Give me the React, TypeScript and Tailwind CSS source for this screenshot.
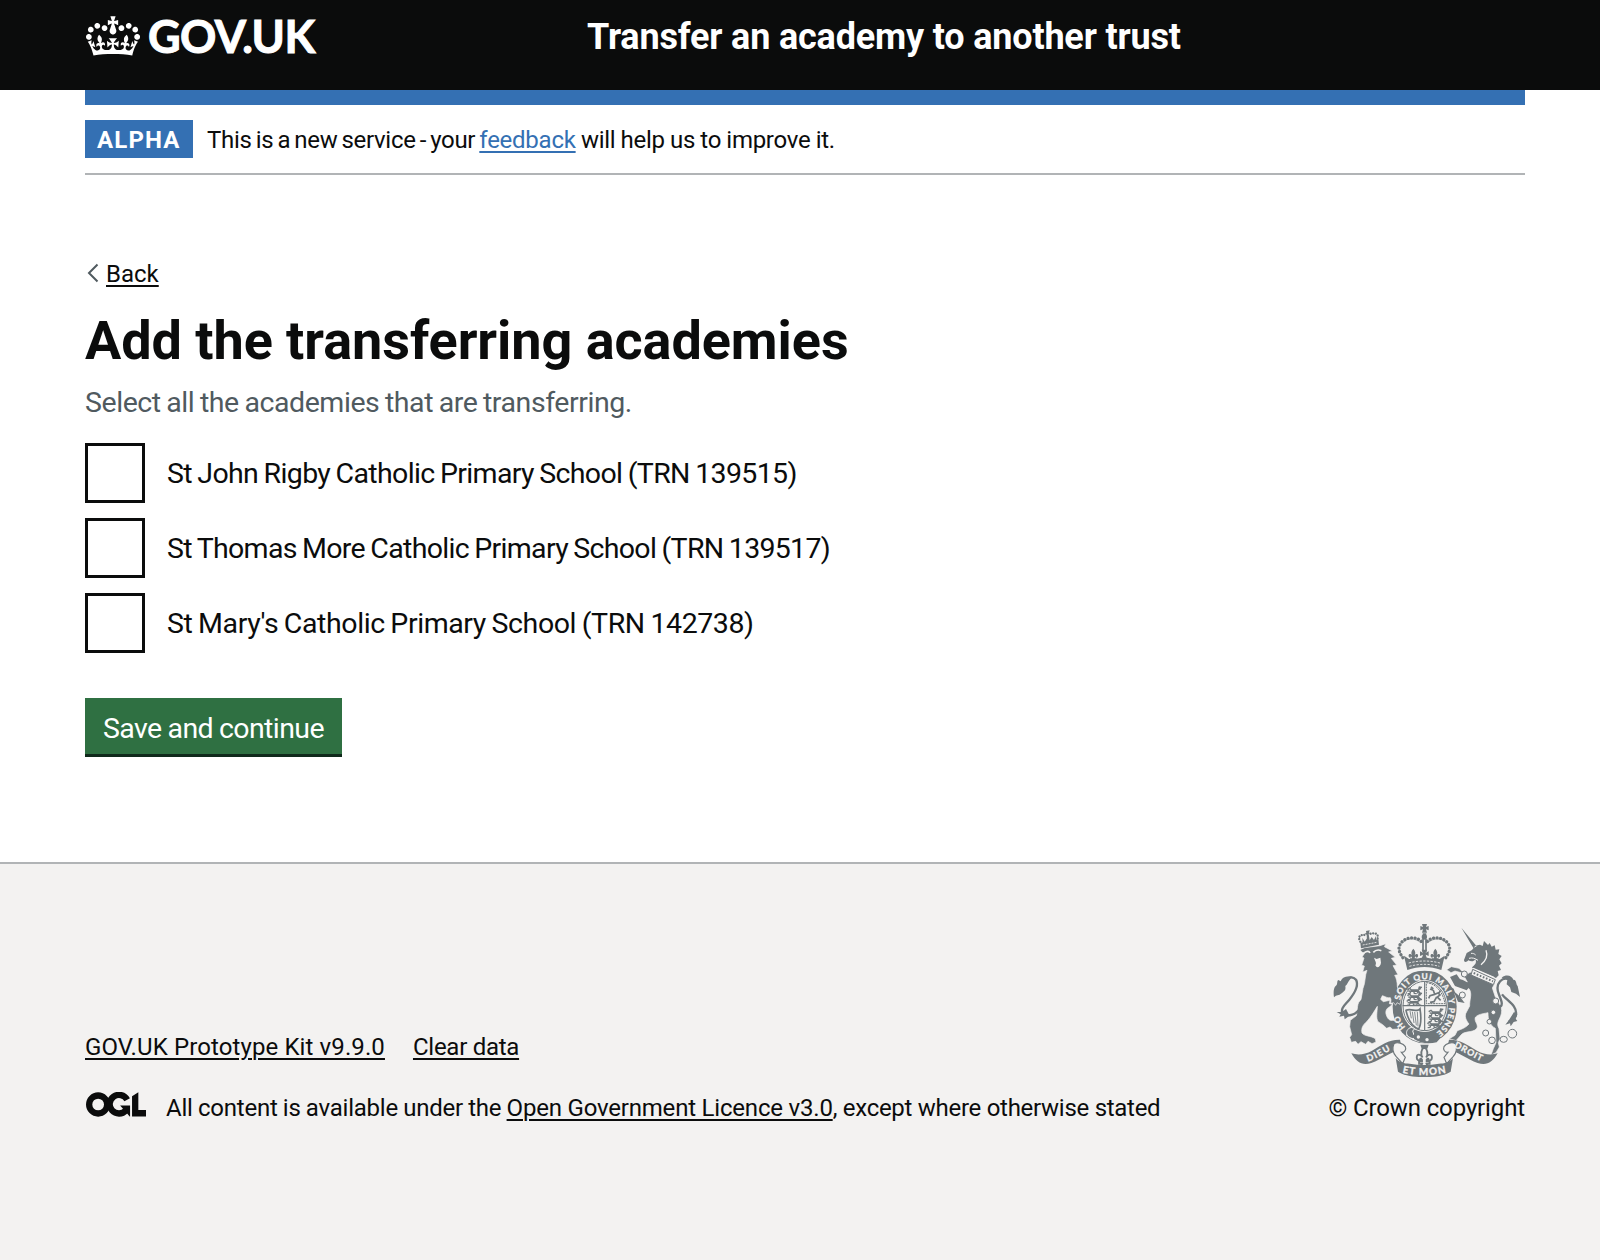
import type { ReactNode } from "react";

const academies = [
  { id: "a1", label: "St John Rigby Catholic Primary School (TRN 139515)", tracking: "tracking-[-0.65px]" },
  { id: "a2", label: "St Thomas More Catholic Primary School (TRN 139517)", tracking: "tracking-[-0.69px]" },
  { id: "a3", label: "St Mary's Catholic Primary School (TRN 142738)", tracking: "tracking-[-0.41px]" },
];

function CrownLogo() {
  return (
    <svg viewBox="0 0 132 97" className="ml-px h-[40px] w-[54px]" fill="currentColor" aria-hidden="true">
      <path
        fillRule="evenodd"
        d="M25 30.2c3.5 1.5 7.7-.2 9.1-3.7 1.5-3.6-.2-7.8-3.9-9.2-3.6-1.4-7.6.3-9.1 3.9-1.4 3.5.3 7.5 3.9 9zM9 39.5c3.6 1.5 7.8-.2 9.2-3.7 1.5-3.6-.2-7.8-3.9-9.1-3.6-1.5-7.6.2-9.1 3.8-1.4 3.5.3 7.5 3.8 9zM4.4 57.2c3.5 1.5 7.7-.2 9.1-3.8 1.5-3.6-.2-7.7-3.9-9.1-3.5-1.5-7.6.3-9.1 3.8-1.4 3.5.3 7.6 3.9 9.1zm38.3-21.4c3.5 1.5 7.7-.2 9.1-3.8 1.5-3.6-.2-7.7-3.9-9.1-3.6-1.5-7.6.3-9.1 3.8-1.3 3.6.4 7.7 3.9 9.1zm64.4-5.6c-3.6 1.5-7.8-.2-9.1-3.7-1.5-3.6.2-7.8 3.8-9.2 3.6-1.4 7.7.3 9.2 3.9 1.3 3.5-.4 7.5-3.9 9zm15.9 9.3c-3.6 1.5-7.7-.2-9.1-3.7-1.5-3.6.2-7.8 3.7-9.1 3.6-1.5 7.7.2 9.2 3.8 1.5 3.5-.3 7.5-3.8 9zm4.7 17.7c-3.6 1.5-7.8-.2-9.2-3.8-1.5-3.6.2-7.7 3.9-9.1 3.6-1.5 7.7.3 9.2 3.8 1.3 3.5-.4 7.6-3.9 9.1zM89.3 35.8c-3.6 1.5-7.8-.2-9.2-3.8-1.4-3.6.2-7.7 3.9-9.1 3.6-1.5 7.7.3 9.2 3.8 1.4 3.6-.3 7.7-3.9 9.1zM69.7 17.7l8.9 4.7V9.3l-8.9 2.8c-.2-.3-.5-.6-.9-.9L72.4 0H59.6l3.5 11.2c-.3.3-.6.5-.9.9l-8.8-2.8v13.1l8.8-4.7c.3.3.6.7.9.9l-5 15.4v.1c-.2.8-.4 1.6-.4 2.4 0 4.1 3.1 7.5 7 8.1h.2c.3 0 .7.1 1 .1.4 0 .7 0 1-.1h.2c4-.6 7.1-4.1 7.1-8.1 0-.8-.1-1.7-.4-2.4V34l-5.1-15.4c.4-.2.7-.6 1-.9zM66 92.8c16.9 0 32.8 1.1 47.1 3.2 4-16.9 8.9-26.7 14-33.5l-9.6-3.4c1 4.9 1.1 7.2 0 10.2-1.5-1.4-3-4.3-4.2-8.7L108.6 76c2.8-2 5-3.2 7.5-3.3-4.4 9.4-10 11.9-13.6 11.2-4.3-.8-6.3-4.6-5.6-7.9 1-4.7 5.7-5.9 8-.5 4.3-8.7-3-11.4-7.6-8.8 7.1-7.2 7.9-13.5 2.1-21.1-8 6.1-8.1 12.3-4.5 20.8-4.7-5.4-12.1-2.5-9.5 6.2 3.4-5.2 7.9-2 7.2 3.1-.6 4.3-6.4 7.8-13.5 7.2-10.3-.9-10.9-8-11.2-13.8 2.5-.5 7.1 1.8 11 7.3L80.2 60c-4.1 4.4-8 5.3-12.3 5.4 1.4-4.4 8-11.6 8-11.6H55.5s6.4 7.2 7.9 11.6c-4.2-.1-8-1-12.3-5.4l1.4 16.4c3.9-5.5 8.5-7.7 10.9-7.3-.3 5.8-.9 12.8-11.1 13.8-7.2.6-12.9-2.9-13.5-7.2-.7-5 3.8-8.3 7.1-3.1 2.7-8.7-4.6-11.6-9.4-6.2 3.7-8.5 3.6-14.7-4.6-20.8-5.8 7.6-5 13.9 2.2 21.1-4.7-2.6-11.9.1-7.7 8.8 2.3-5.5 7.1-4.2 8.1.5.7 3.3-1.3 7.1-5.7 7.9-3.5.7-9-1.8-13.5-11.2 2.5.1 4.7 1.3 7.5 3.3l-4.7-15.4c-1.2 4.4-2.7 7.2-4.3 8.7-1.1-3-.9-5.3 0-10.2l-9.5 3.4c5 6.9 9.9 16.7 14 33.5 14.8-2.1 30.8-3.2 47.7-3.2z"
      />
    </svg>
  );
}

/* Open Government Licence mark: interlocked ring, open ring with spur, and angled bar. */
function OglLogo() {
  return (
    <svg viewBox="0 0 483.2 195.7" className="-mt-px ml-px h-[25px] w-[60px]" fill="currentColor" aria-hidden="true">
      <circle cx="97.8" cy="97.8" r="72.5" fill="none" stroke="currentColor" strokeWidth="50.5" />
      <path d="M331.5 59A75 75 0 1 0 322 145" fill="none" stroke="currentColor" strokeWidth="50.5" />
      <path d="M275 106h80v88h-3l-77-88z" />
      <path d="M370.8 32.4 421.5 0v142.8h61.7v50.7H370.8z" />
    </svg>
  );
}

const G = "#6f777b";
const L = "#f3f2f1";

function ChargeLion({ x, y }: { x: number; y: number }) {
  return (
    <g transform={`translate(${x} ${y})`} stroke={G} fill="none" strokeWidth="4">
      <path d="M3 5l7-4 5 5 22-1 7-4M6 9l9 1 22-1 4 7 6 1M14 8l-3 8-7 1M22 9l2 7 7 1M37 8l-4 8M37 3l2-6 8 1" />
    </g>
  );
}

function Fleur({ x, y, s = 1 }: { x: number; y: number; s?: number }) {
  return (
    <path
      transform={`translate(${x} ${y}) scale(${s})`}
      d="M0-16C6-9 7-3 3 3 6-3 13-4 13 3c0 4-3 6-6 5 1-3-1-4-3-1v3h5v4H4l3 7h-14l3-7h-5v-4h5V7c-2-3-4-2-3 1-3 1-6-1-6-5 0-7 7-6 10 0C-7-3-6-9 0-16z"
    />
  );
}

function RoyalArms() {
  return (
    <svg viewBox="9 27 561 459" className="mr-[5px] h-[153px] w-[187px]" fill={G} aria-hidden="true">
      {/* crown */}
      <path d="M276 27h15l-3 9 8-3v13l-8-3 3 10h-15l3-10-8 3V33l8 3zM278 55h11v10h-11z" />
      <circle cx="283" cy="66" r="8" />
      <path d="M279 72v38M288 72v38" stroke={G} strokeWidth="5" />
      <path
        d="M274 79C255 60 213 67 207 98c-1 14 8 24 16 37M292 79c19-19 61-12 67 19 1 14-8 24-16 37"
        fill="none"
        stroke={G}
        strokeWidth="10"
        strokeLinecap="round"
        strokeDasharray="0.1 10.5"
      />
      <path d="M220 82c10-13 35-15 53 2M346 82c-10-13-35-15-53 2" fill="none" stroke={G} strokeWidth="2" />
      <Fleur x={250} y={119} s={1.1} />
      <Fleur x={316} y={119} s={1.1} />
      <path d="M275 104h16l-4 9 9-4v14l-9-4 4 12h-16l4-12-9 4v-14l9 4z" />
      <path d="M222 122l15 10h18l28-5 28 5h18l15-10-10 43c-34-12-68-12-102 0z" />
      <path d="M236 144c31-8 63-8 94 0M238 154c30-8 60-8 90 0" fill="none" stroke={L} strokeWidth="2.5" strokeDasharray="7 4" />

      {/* garter and shield */}
      <ellipse cx="284" cy="275" rx="96" ry="110" />
      <path d="M228 168c36-12 74-12 110 0l-1 8c-34-12-72-12-108 0z" fill={L} />
      <ellipse cx="284" cy="273" rx="69" ry="78" fill={L} />
      <ellipse cx="284" cy="273" rx="65" ry="74" fill="none" stroke={G} strokeWidth="3" />
      <path d="M218 272h132M284 199v148" stroke={G} strokeWidth="3.5" />
      <ChargeLion x={229} y={219} />
      <ChargeLion x={229} y={237} />
      <ChargeLion x={227} y={254} />
      <ChargeLion x={293} y={285} />
      <ChargeLion x={292} y={303} />
      <ChargeLion x={289} y={321} />
      <path d="M289 203c28 2 50 28 56 63h-56z" fill="none" stroke={G} strokeWidth="3" strokeDasharray="6 2" />
      <path
        d="M300 222l10 4 4 12 10-4 6 6-8 6 10 10M314 238l-14 4-4 8M320 246l-8 14-12 2M303 216l7 6M331 226l-4 8"
        fill="none"
        stroke={G}
        strokeWidth="5"
      />
      <path d="M228 286c6 28 20 50 38 56 8-14 8-34 4-60-8 12-28-4-42 4z" fill="none" stroke={G} strokeWidth="5" />
      <path d="M240 288l4 22M247 290l5 34M254 291l5 40M262 290l2 44" stroke={G} strokeWidth="2.5" />
      <path d="M232 353c22 22 62 30 118 12l-4 10c-46 18-92 10-118-14z" fill={L} />
      <path d="M236 341c-8 6-9 18 0 24 9 8 20 7 24 0l-8-5-4-12 6-7c-6-4-13-5-18 0z" stroke={L} strokeWidth="3" />
      <path d="M252 350c20 14 48 20 82 16l-14 16c-26 6-50 2-68-10z" />
      <circle cx="265" cy="366" r="5" fill={L} />
      <circle cx="291" cy="374" r="5" fill={L} />

      {/* lion */}
      <path
        d="M96 112l-6-8 14-6 46-6 18-6-5 9 24 13-11 3 20 16-12 3 16 20-11 2 15 27-10 2c5 8 8 20 8 34l5 19 8 12-5 22-9-5-4 8-6-8-9 2 1-11-2-6c-9 2-16-4-24-6l-5 11 8 7 20-4-2 10 10 2-10 8c-9 4-13 14-9 24 4 12 10 18 20 16l16 5 5 9-6 12-16 1-8-7-10 4-12-11-14-9c-7-12-2-30-2-46-10 16-18 30-30 44-14 12-19 22-16 36 7 10 26 8 40 17l2 10-12 5-12-7-7 9-14-8-9 8-7-9-13 3-5-15 6-8-6-24 2-19 18-14c5-18 0-38 14-48l6-34c8-18 5-38 12-54l-13 5 5-18-8-2 7-22-6-3 9-13z"
        stroke={L}
        strokeWidth="2"
      />
      <path d="M103 113c8-6 14-5 17 1M130 112c7-8 16-8 24-5" fill="none" stroke={L} strokeWidth="5" />
      <path d="M132 128l8 4 11-4 2 15c-2 13-12 19-17 8 5-7-1-14-4-23z" fill={L} />
      <path d="M91 83l54-11 2 17-54 11z" />
      <path
        d="M91 80c-9-14-1-24 18-19M143 70c3-14-8-19-27-12"
        fill="none"
        stroke={G}
        strokeWidth="7"
        strokeLinecap="round"
        strokeDasharray="0.1 8"
      />
      <path d="M108 48l11-2-2 7 4 1-5 3 3 19-8 2-1-19-6-2 5-4zM97 68l7 12 7-10 7 7 7-11 7 9 6-12v12l-40 9z" />
      <path d="M98 90l42-8" stroke={L} strokeWidth="2.5" strokeDasharray="6 3" />
      <path
        d="M86 286c-15 18-38 20-50 4-3-13 10-21 22-36 18-22 28-45 20-60-8-10-24-9-36 2"
        fill="none"
        stroke={G}
        strokeWidth="7"
      />
      <path d="M68 185c-26-2-31 4-36 14l-7-4c-6 4 0 12-8 18-6 5-7 18-5 34 8-8 14-4 23-12 8-8 13-8 11-22 7-5 9-18 22-28z" />
      <path d="M48 282c-10 8-18 10-28 9l12 7-4 7 14-3 2 11 15-11z" />

      {/* unicorn */}
      <path d="M394 38l36 61 10-5zM404 130l6-16 16-9 10-13 14-3 8 4 4-15 12 12 5-6 6 11 9-4 3 13 11-1-3 14 10 6-7 10 7 12-8 7 6 13-10 3 3 13-8 8-72-31c7-8 16-13 10-25-6 9-15 6-21 3-5 6-13 7-13-1z" />
      <path d="M423 115c7 0 10 1 14 5M417 130c10-3 18 0 27 6" fill="none" stroke={L} strokeWidth="3" />
      <path d="M468 106c7 18 0 31-15 43" fill="none" stroke={L} strokeWidth="4" />
      <path
        d="M421 172l74 32-8 15 8 24c4 16 20 26 20 44 0 24-20 33-8 54l3 30-5 12 3 13-10 17-15 7 7-19 8-18-2-43c-19-11-22-28-22-47-19 4-30 5-38 14-5 14 14 23 2 36-12 10-36 5-45 17l-15 17-20-6 17-10 7-14c14-5 26-9 35-20-8-10-16-24-7-37l9-17c-1-19 9-36-2-52l-28-18c-7-4-9-6-6 8-8 1-13-5-12-13 8-9 18-7 28-4l13 7-15-27-22-6-12 5-13-9 14-9 23 5 20 19z"
        stroke={L}
        strokeWidth="2"
      />
      <path d="M360 186l20-8 17 25 23 11-10 12-35-13zM374 236l-16-9 1-14 12 8 4 11 14 12 15 20-20-4z" />
      <path d="M430 158l62 27 5 10-6 15-69-31z" fill={L} />
      <path d="M428 163l-5 17 67 29 6-15z" fill="none" stroke={G} strokeWidth="3" />
      <path d="M431 174l58 25" stroke={G} strokeWidth="6" strokeDasharray="5 5" />
      <path
        d="M503 279c22-5 9-26 3-43-12-32 12-54 35-41l8 12M516 238c14 19 46 33 42 61-3 14-12 18-22 20"
        fill="none"
        stroke={G}
        strokeWidth="7"
      />
      <path d="M515 188c17-13 31-3 35 6 10-1 7 12 13 19l7 33-12-10-14-5-4-14-10-9 2-14zM552 291l10 7-5 13 5 7-11 3-9 13-2-9-14 4 11-14z" />
      <g fill={L} stroke={G} strokeWidth="3">
        <circle cx="403" cy="177" r="9" />
        <circle cx="397" cy="240" r="9" />
        <circle cx="497" cy="258" r="9" />
        <circle cx="490" cy="292" r="7" />
        <circle cx="478" cy="320" r="7" />
        <circle cx="467" cy="354" r="9" />
        <circle cx="486" cy="376" r="10" />
        <ellipse cx="521" cy="373" rx="11" ry="9" />
        <circle cx="547" cy="356" r="13" />
      </g>

      {/* fleur-de-lis and ribbon */}
      <path d="M271 389h25l-4 12h-17z" />
      <g fill={L} stroke={G} strokeWidth="3.2">
        <Fleur x={283} y={422} s={1.75} />
      </g>
      <path d="M64 415c20 6 40 4 62-8 28-16 50-34 84-33l6 30c-32 4-60 28-92 40-26 8-44 0-60-29z" />
      <path d="M503 415c-20 6-40 4-62-8-28-16-50-34-84-33l-6 30c32 4 60 28 92 40 26 8 44 0 60-29z" />
      <path
        d="M192 386c10-6 28-1 34 9 4 9-3 18-12 17l12 15-8 19-20-22c-10-12-12-25-6-38zM376 386c-10-6-28-1-34 9-4 9 3 18 12 17l-12 15 8 19 20-22c10-12 12-25 6-38z"
        fill={L}
        stroke={G}
        strokeWidth="3.5"
      />
      <path d="M197 429c10 14 26 17 42 17 29 5 59 5 88 0 16 0 32-3 42-17l-7 41c-32 22-126 22-158 0z" />

      {/* mottos */}
      <path id="garter-main" d="M211 256C215 218 246 193 284 193C324 193 357 226 357 275C357 308 344 334 320 352" fill="none" />
      <path id="garter-left" d="M227 336C214 324 208 308 207 290" fill="none" />
      <path id="ribbon-left" d="M114 440C142 431 162 416 196 398" fill="none" />
      <path id="ribbon-mid" d="M217 473C255 483 310 483 350 473" fill="none" />
      <path id="ribbon-right" d="M371 396C402 410 424 428 466 444" fill="none" />
      <g fontFamily="Lato, sans-serif" fontWeight="900" fill={L} stroke={L} strokeWidth="0.6">
        <text fontSize="25">
          <textPath href="#garter-main" textLength="318" lengthAdjust="spacing">
            SOIT QUI MAL Y PENSE
          </textPath>
        </text>
        <text fontSize="25">
          <textPath href="#garter-left">HO</textPath>
        </text>
        <text fontSize="27">
          <textPath href="#ribbon-left" textLength="76" lengthAdjust="spacing">
            DIEU
          </textPath>
        </text>
        <text fontSize="30">
          <textPath href="#ribbon-mid" textLength="132" lengthAdjust="spacing">
            ET MON
          </textPath>
        </text>
        <text fontSize="27">
          <textPath href="#ribbon-right" textLength="92" lengthAdjust="spacing">
            DROIT
          </textPath>
        </text>
      </g>
    </svg>
  );
}

function Link({ children, className = "" }: { children: ReactNode; className?: string }) {
  return (
    <a
      href="#"
      className={`underline decoration-[1.5px] underline-offset-[2.5px] [text-decoration-skip-ink:auto] ${className}`}
    >
      {children}
    </a>
  );
}

export default function App() {
  return (
    <div className="flex h-[1260px] w-[1600px] flex-col overflow-hidden bg-white font-[Roboto,sans-serif] text-2xl text-[#0b0c0c]">
      <header className="h-[90px] shrink-0 bg-[#0b0c0c] text-white">
        <div className="ml-[85px] flex w-[1440px] items-start">
          <a href="#" className="flex w-[502px] items-start pt-4">
            <CrownLogo />
            <span className="-mt-[2px] ml-[8px] font-[Lato,sans-serif] text-[45px] leading-[45px] font-bold tracking-[-0.6px] [-webkit-text-stroke:1px_white]">
              GOV.UK
            </span>
          </a>
          <a href="#" className="pt-[15px] text-4xl leading-[45px] font-bold tracking-[-0.18px]">
            Transfer an academy to another trust
          </a>
        </div>
      </header>

      <div className="ml-[85px] w-[1440px] border-t-[15px] border-[#3470b3]">
        <div className="flex gap-3.5 border-b-2 border-[#b1b4b6] py-[15px] leading-[38px]">
          <strong className="h-[38px] w-[108px] bg-[#3470b3] pl-3 font-bold tracking-[1.15px] text-white">
            <span className="relative top-px">ALPHA</span>
          </strong>
          <p className="h-[38px] pt-px whitespace-pre">
            <span className="tracking-[-0.31px] [word-spacing:-1.5px]">This is a new service - your </span>
            <Link className="tracking-[-0.25px] text-[#3470b3]">feedback</Link>
            <span className="tracking-[-0.28px] [word-spacing:-0.4px]"> will help us to improve it.</span>
          </p>
        </div>

        <main className="h-[687px] pt-[84px]">
          <a href="#" className="flex h-[30px] items-start leading-[30px]">
            <svg viewBox="0 0 21 30" className="h-[30px] w-[21px]" fill="none" stroke="#505a5f" strokeWidth="2">
              <path d="M12.5 5.5 4 14l8.5 8.5" />
            </svg>
            <Link>Back</Link>
          </a>
          <h1 className="mt-6 text-[54px] leading-[56px] font-bold tracking-[-0.06px]">
            Add the transferring academies
          </h1>
          <p className="mt-4 text-[28.5px] leading-9 tracking-[-0.44px] text-[#505a5f] [word-spacing:-1px]">
            Select all the academies that are transferring.
          </p>
          <div className="mt-[22px] flex flex-col gap-[15px]">
            {academies.map((a) => (
              <label key={a.id} className="flex h-[60px] items-center">
                <input type="checkbox" className="size-[60px] shrink-0 appearance-none border-[3px] border-[#0b0c0c]" />
                <span className={`pt-[2px] pl-[22px] text-[28.5px] leading-[60px] [word-spacing:-1px] ${a.tracking}`}>
                  {a.label}
                </span>
              </label>
            ))}
          </div>
          <button className="mt-[45px] block h-[59px] w-[257px] border-b-[3px] border-[#10291b] bg-[#2f7042] pt-[5px] pl-[18px] text-left text-[28.5px] leading-[50px] tracking-[-0.6px] whitespace-nowrap text-white [word-spacing:-0.5px]">
            Save and continue
          </button>
        </main>
      </div>

      <footer className="grow border-t-2 border-[#b1b4b6] bg-[#f3f2f1] pt-[60px] leading-[30px]">
        <div className="ml-[85px] flex w-[1440px] items-end justify-between">
          <div className="flex flex-col gap-[31px]">
            <div className="flex gap-7">
              <Link className="tracking-[0.11px]">GOV.UK Prototype Kit v9.9.0</Link>
              <Link className="tracking-[-0.27px]">Clear data</Link>
            </div>
            <div className="flex">
              <OglLogo />
              <p className="pl-[20px] whitespace-pre">
                <span className="tracking-[-0.22px] [word-spacing:-0.5px]">All content is available under the </span>
                <Link className="tracking-[-0.2px]">Open Government Licence v3.0</Link>
                <span className="tracking-[-0.28px]">, except where otherwise stated</span>
              </p>
            </div>
          </div>
          <a href="#" className="flex flex-col items-end gap-4 tracking-[-0.13px]">
            <RoyalArms />
            <span>© Crown copyright</span>
          </a>
        </div>
      </footer>
    </div>
  );
}
